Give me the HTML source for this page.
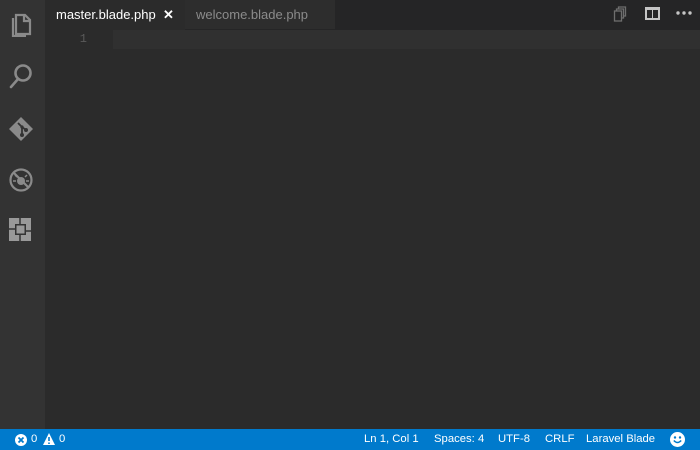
<!DOCTYPE html>
<html><head><style>
*{margin:0;padding:0;box-sizing:border-box}
body{width:700px;height:450px;overflow:hidden;background:#2b2b2b;font-family:"Segoe UI","Liberation Sans",sans-serif;position:relative}
.act{position:absolute;left:0;top:0;width:45px;height:429px;background:#333333}
.tabs{position:absolute;left:45px;top:0;width:655px;height:30px;background:#252526}
.tab1{position:absolute;left:0;top:0;width:140px;height:30px;background:#2b2b2b;color:#fff;font-size:13px;line-height:29px;padding-left:11px}
.tab1 .x{position:absolute;left:118px;top:0;font-weight:bold;font-size:13px}
.tab2{position:absolute;left:140px;top:0;width:150px;height:30px;background:#2d2d2d;color:#8b8b8b;font-size:13px;line-height:29px;padding-left:11px;border-bottom:1px solid #252526}
.lh{position:absolute;left:113px;top:30px;width:587px;height:19px;background:#303030}
.ln{position:absolute;left:45px;top:30px;width:42px;text-align:right;color:#5a5a5a;font-size:12px;line-height:19px;font-family:"Liberation Mono",monospace}
.sb{position:absolute;left:0;top:429px;width:700px;height:21px;background:#007acc;color:#fff;font-size:11.3px;line-height:21px}
.sb span{position:absolute;top:0}
svg{position:absolute}
</style></head><body>
<div class="act"></div>
<svg style="left:9px;top:11px" width="24" height="26" viewBox="0 0 24 26" fill="none" stroke="#8a8a8a" stroke-width="2.2"><path d="M7 4H16L21 9V23H7Z"/><path d="M4 7V25H17"/><path d="M15 4V10H21"/></svg>
<svg style="left:8px;top:62px" width="26" height="28" viewBox="0 0 26 28" fill="none" stroke="#8a8a8a" stroke-width="2.6"><circle cx="15" cy="11" r="7.5"/><path d="M10 17L3 25" stroke-linecap="round"/></svg>
<svg style="left:8px;top:116px" width="26" height="26" viewBox="0 0 26 26"><path d="M13 1L25 13L13 25L1 13Z" fill="#8a8a8a"/><path d="M10 7L14 11V19M14 11L18 14" stroke="#333" stroke-width="1.8" fill="none"/><circle cx="14" cy="19" r="2" fill="#333"/><circle cx="18" cy="14" r="2" fill="#333"/><circle cx="14" cy="11" r="1.6" fill="#333"/></svg>
<svg style="left:8px;top:167px" width="26" height="26" viewBox="0 0 26 26" fill="none" stroke="#8a8a8a" stroke-width="2.2"><circle cx="13" cy="13" r="10.5"/><path d="M6 6L20 20"/><circle cx="13" cy="14" r="4" fill="#8a8a8a" stroke="none"/><path d="M9 10L7 8M17 10L19 8M8 14H5M18 14H21" stroke-width="1.5"/></svg>
<svg style="left:9px;top:218px" width="24" height="24" viewBox="0 0 24 24"><rect x="0" y="0" width="22" height="23" fill="#999"/><rect x="6" y="6" width="11" height="11" fill="#333"/><rect x="7.5" y="7.5" width="8" height="8" fill="#999"/><path d="M11 0V6M0 11H6M22 13H17M11 17V23" stroke="#333" stroke-width="1.5"/></svg>
<div class="tabs">
<div class="tab1">master.blade.php<span class="x">✕</span></div>
<div class="tab2">welcome.blade.php</div>
</div>
<svg style="left:613px;top:6px" width="14" height="16" viewBox="0 0 14 16" fill="none" stroke="#6e6e6e" stroke-width="1.3"><rect x="1.5" y="5" width="7" height="10"/><path d="M3.5 5V3H10.5V12H8.5M5.5 3V1H12.5V10H10.5"/></svg>
<svg style="left:645px;top:7px" width="15" height="13" viewBox="0 0 15 13"><rect x="0" y="0" width="15" height="13" fill="#c5c5c5"/><rect x="2" y="3" width="5" height="8" fill="#252526"/><rect x="8" y="3" width="5" height="8" fill="#252526"/></svg>
<svg style="left:676px;top:11px" width="16" height="4" viewBox="0 0 16 4" fill="#c5c5c5"><circle cx="2" cy="2" r="1.7"/><circle cx="8" cy="2" r="1.7"/><circle cx="14" cy="2" r="1.7"/></svg>
<div class="lh"></div>
<div class="ln">1</div>
<div class="sb">
<svg style="left:15px;top:5px" width="12" height="12" viewBox="0 0 12 12"><circle cx="6" cy="6" r="6" fill="#fff"/><path d="M3.5 3.5L8.5 8.5M8.5 3.5L3.5 8.5" stroke="#007acc" stroke-width="1.8"/></svg>
<span style="left:31px">0</span>
<svg style="left:43px;top:4px" width="12" height="12" viewBox="0 0 12 12"><path d="M6 0L12 12H0Z" fill="#fff"/><path d="M6 4V8M6 9.5V11" stroke="#007acc" stroke-width="1.6"/></svg>
<span style="left:59px">0</span>
<span style="left:364px">Ln 1, Col 1</span>
<span style="left:434px">Spaces: 4</span>
<span style="left:498px">UTF-8</span>
<span style="left:545px">CRLF</span>
<span style="left:586px">Laravel Blade</span>
<svg style="left:670px;top:3px" width="15" height="15" viewBox="0 0 15 15"><circle cx="7.5" cy="7.5" r="7.5" fill="#fff"/><circle cx="5" cy="5.5" r="1.2" fill="#007acc"/><circle cx="10" cy="5.5" r="1.2" fill="#007acc"/><path d="M3.8 8.5Q7.5 12.5 11.2 8.5" stroke="#007acc" stroke-width="1.4" fill="none"/></svg>
</div>
</body></html>
